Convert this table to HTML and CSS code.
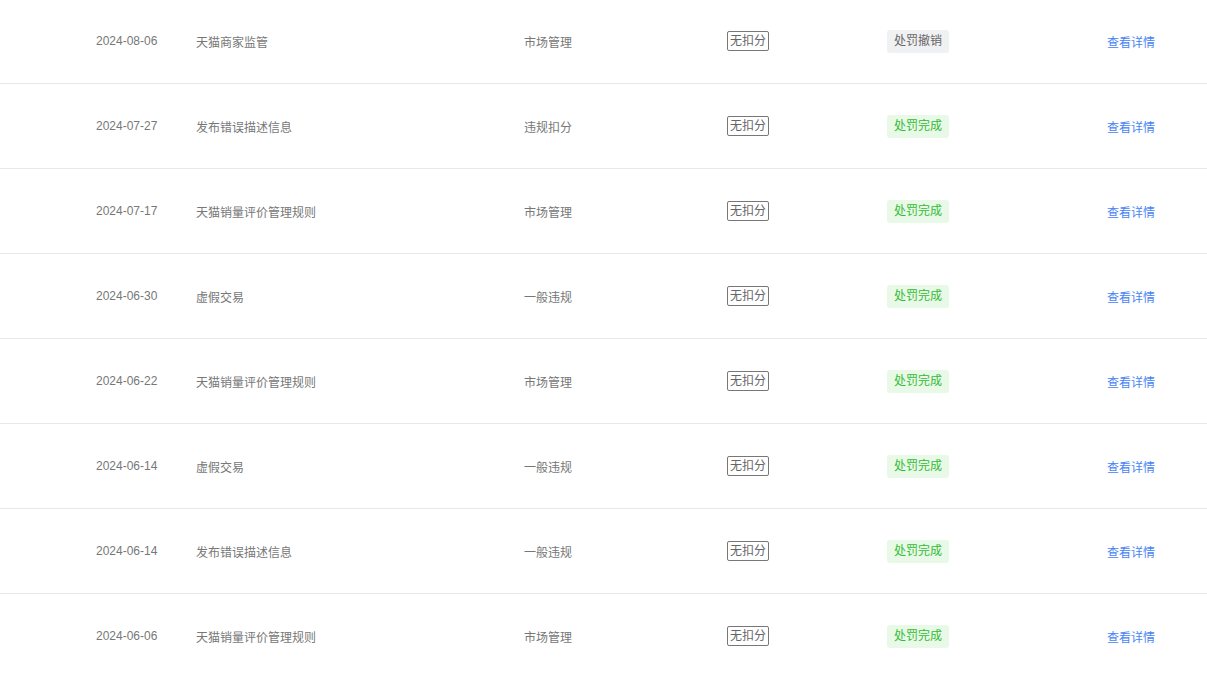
FILE: index.html
```html
<!DOCTYPE html>
<html lang="zh-CN">
<head>
  <meta charset="UTF-8" />
  <title>处罚记录</title>
  <link rel="stylesheet" href="styles.css">
</head>
<body>
  <div class="records">
    <div class="row">
      <span class="date">2024-08-06</span>
      <span class="title">天猫商家监管</span>
      <span class="type">市场管理</span>
      <span><span class="score">无扣分</span></span>
      <span><span class="status revoked">处罚撤销</span></span>
      <a class="detail" href="#">查看详情</a>
    </div>
    <div class="row">
      <span class="date">2024-07-27</span>
      <span class="title">发布错误描述信息</span>
      <span class="type">违规扣分</span>
      <span><span class="score">无扣分</span></span>
      <span><span class="status done">处罚完成</span></span>
      <a class="detail" href="#">查看详情</a>
    </div>
    <div class="row">
      <span class="date">2024-07-17</span>
      <span class="title">天猫销量评价管理规则</span>
      <span class="type">市场管理</span>
      <span><span class="score">无扣分</span></span>
      <span><span class="status done">处罚完成</span></span>
      <a class="detail" href="#">查看详情</a>
    </div>
    <div class="row">
      <span class="date">2024-06-30</span>
      <span class="title">虚假交易</span>
      <span class="type">一般违规</span>
      <span><span class="score">无扣分</span></span>
      <span><span class="status done">处罚完成</span></span>
      <a class="detail" href="#">查看详情</a>
    </div>
    <div class="row">
      <span class="date">2024-06-22</span>
      <span class="title">天猫销量评价管理规则</span>
      <span class="type">市场管理</span>
      <span><span class="score">无扣分</span></span>
      <span><span class="status done">处罚完成</span></span>
      <a class="detail" href="#">查看详情</a>
    </div>
    <div class="row">
      <span class="date">2024-06-14</span>
      <span class="title">虚假交易</span>
      <span class="type">一般违规</span>
      <span><span class="score">无扣分</span></span>
      <span><span class="status done">处罚完成</span></span>
      <a class="detail" href="#">查看详情</a>
    </div>
    <div class="row">
      <span class="date">2024-06-14</span>
      <span class="title">发布错误描述信息</span>
      <span class="type">一般违规</span>
      <span><span class="score">无扣分</span></span>
      <span><span class="status done">处罚完成</span></span>
      <a class="detail" href="#">查看详情</a>
    </div>
    <div class="row">
      <span class="date">2024-06-06</span>
      <span class="title">天猫销量评价管理规则</span>
      <span class="type">市场管理</span>
      <span><span class="score">无扣分</span></span>
      <span><span class="status done">处罚完成</span></span>
      <a class="detail" href="#">查看详情</a>
    </div>
  </div>
</body>
</html>
```

FILE: styles.css
```css
body {
  margin: 0;
  padding: 0;
  background: #fff;
  font-family: "Liberation Sans", "Noto Sans CJK SC", sans-serif;
  font-size: 12px;
  color: #777;
  overflow: hidden;
}

.records {
  margin-top: -1px;
}

.row {
  display: grid;
  grid-template-columns: 100px 328px 203px 160px 220px 60px;
  align-items: center;
  height: 84px;
  padding-left: 96px;
  border-bottom: 1px solid #e8e8e8;
}

.score {
  display: inline-block;
  border: 1px solid #777;
  border-radius: 2px;
  padding: 0 2px;
  line-height: 18px;
  color: #666;
}

.status {
  display: inline-block;
  padding: 0 7px;
  line-height: 23px;
  border-radius: 3px;
}

.status.revoked {
  background: #f0f1f3;
  color: #666;
}

.status.done {
  background: #e8f9e8;
  color: #33bb33;
}

.detail {
  color: #4783f5;
  text-decoration: none;
}
```
